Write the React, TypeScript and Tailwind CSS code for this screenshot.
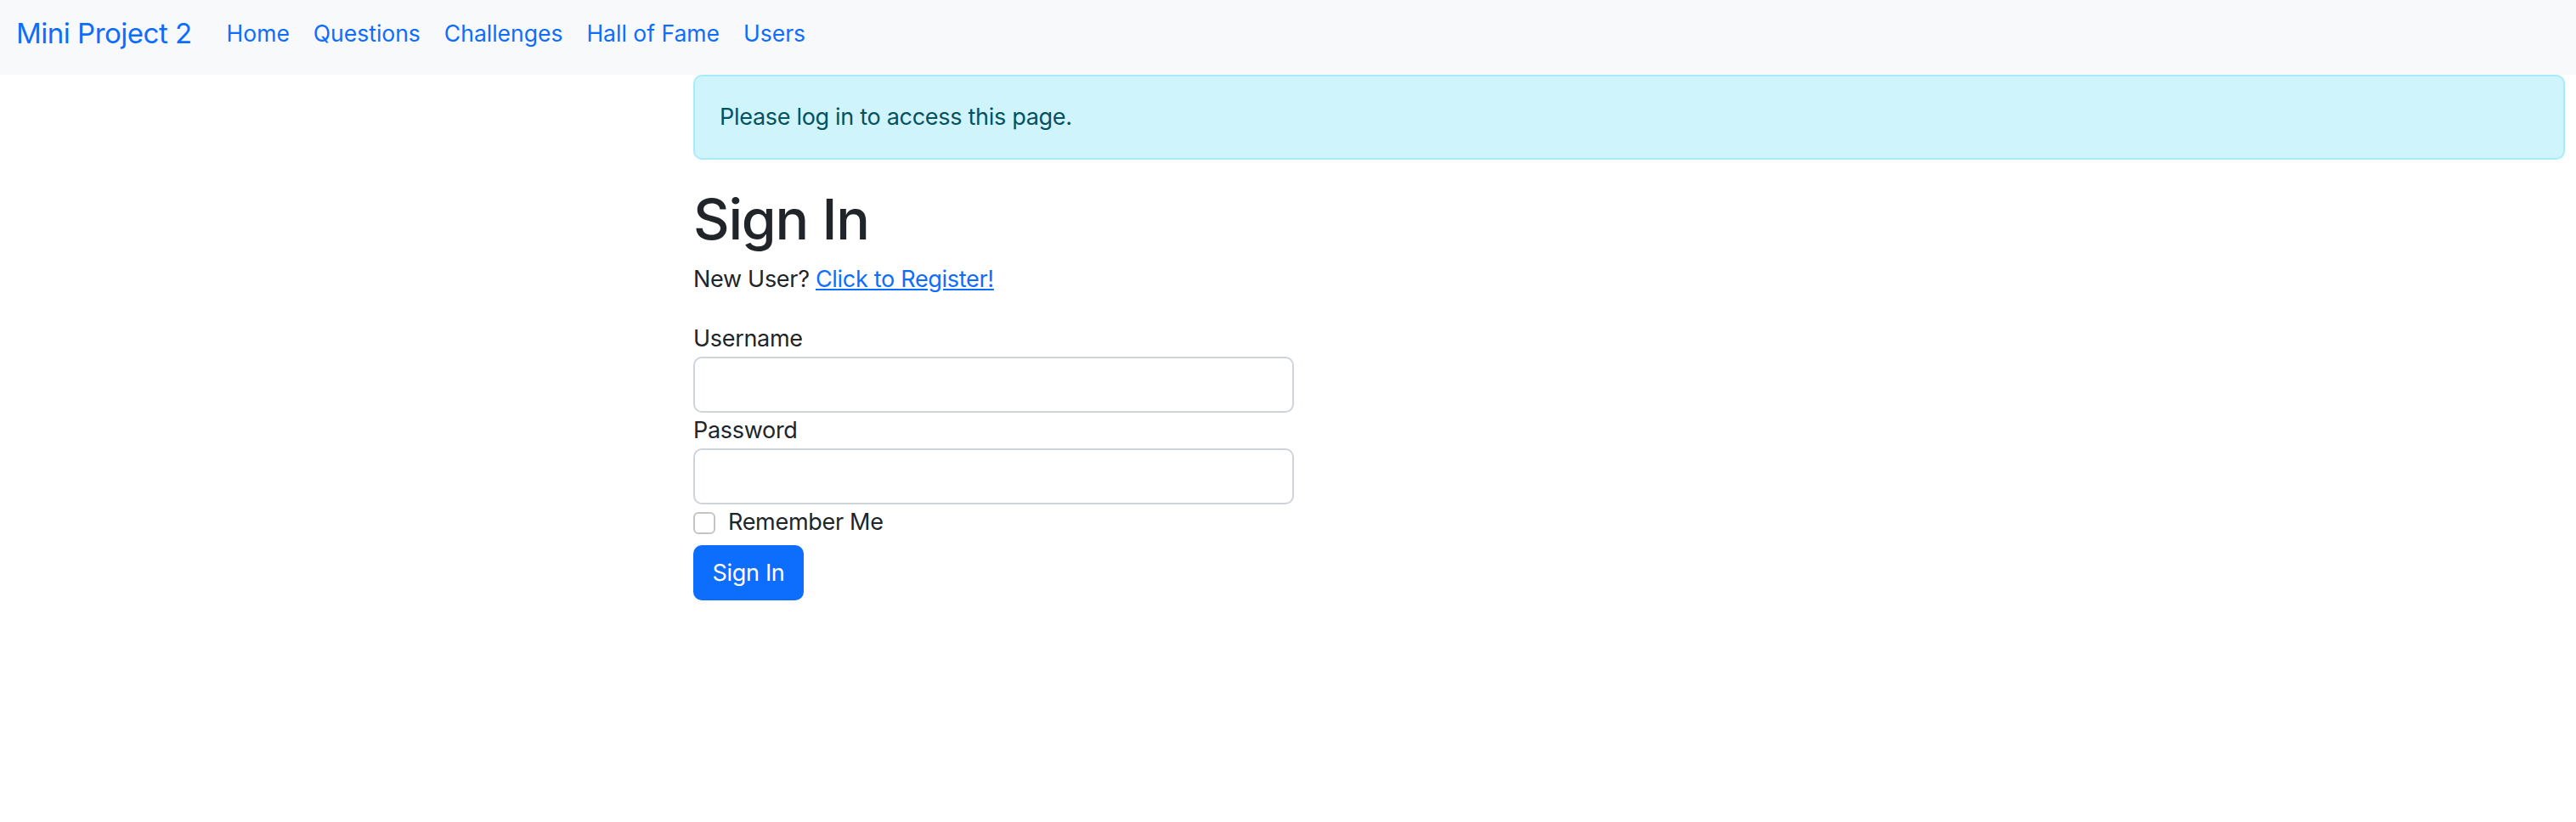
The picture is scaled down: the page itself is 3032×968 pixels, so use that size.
import React from "react";

const links = ["Home", "Questions", "Challenges", "Hall of Fame", "Users"];

export default function App() {
  return (
    <div className="min-h-[968px] bg-white font-['Inter','Liberation_Sans',sans-serif] text-[#212529]">
      <nav className="flex h-[88px] items-start bg-[#f8f9fa] pl-[19px] pt-[13px]">
        <div className="flex h-[52px] items-center">
          <a href="#" className="mr-[27px] text-[33px] leading-[52px] tracking-[-0.5px] text-[#0d6efd]">
            Mini Project 2
          </a>
          <ul className="flex items-center">
            {links.map((l) => (
              <li key={l}>
                <a href="#" className="block px-[14px] text-[26.5px] leading-[40px] text-[#0d6efd]">
                  {l}
                </a>
              </li>
            ))}
          </ul>
        </div>
      </nav>
      <main className="pl-[816px] pr-[13px]">
        <div className="mb-[29px] h-[100px] rounded-[10px] border-2 border-[#a8ecfa] bg-[#cff4fc] px-[29px] py-[27px] text-[27px] leading-[42px] tracking-[-0.3px] text-[#055160]">
          Please log in to access this page.
        </div>
        <h1 className="mb-[9px] text-[66px] font-medium leading-[82px] tracking-[-1.2px]">Sign In</h1>
        <p className="mb-[28px] text-[27px] leading-[42px] tracking-[-0.3px]">
          New User?{" "}
          <a href="#" className="text-[#0d6efd] underline">
            Click to Register!
          </a>
        </p>
        <form className="w-[707px] text-[27px] tracking-[-0.3px]" onSubmit={(e) => e.preventDefault()}>
          <label className="block leading-[42px]">Username</label>
          <input
            type="text"
            className="block h-[66px] w-full rounded-[10px] border-2 border-[#ced4da] bg-white px-[22px] outline-none"
          />
          <label className="block leading-[42px]">Password</label>
          <input
            type="password"
            className="block h-[66px] w-full rounded-[10px] border-2 border-[#ced4da] bg-white px-[22px] outline-none"
          />
          <div className="flex h-[42px] items-start">
            <input
              type="checkbox"
              className="mt-[9px] size-[26px] appearance-none rounded-[6px] border-2 border-[#c4c4c4] bg-white"
            />
            <label className="ml-[15px] leading-[42px]">Remember Me</label>
          </div>
          <button
            type="submit"
            className="mt-[6px] h-[65px] w-[130px] rounded-[10px] bg-[#0d6efd] leading-[42px] text-white"
          >
            Sign In
          </button>
        </form>
      </main>
    </div>
  );
}
